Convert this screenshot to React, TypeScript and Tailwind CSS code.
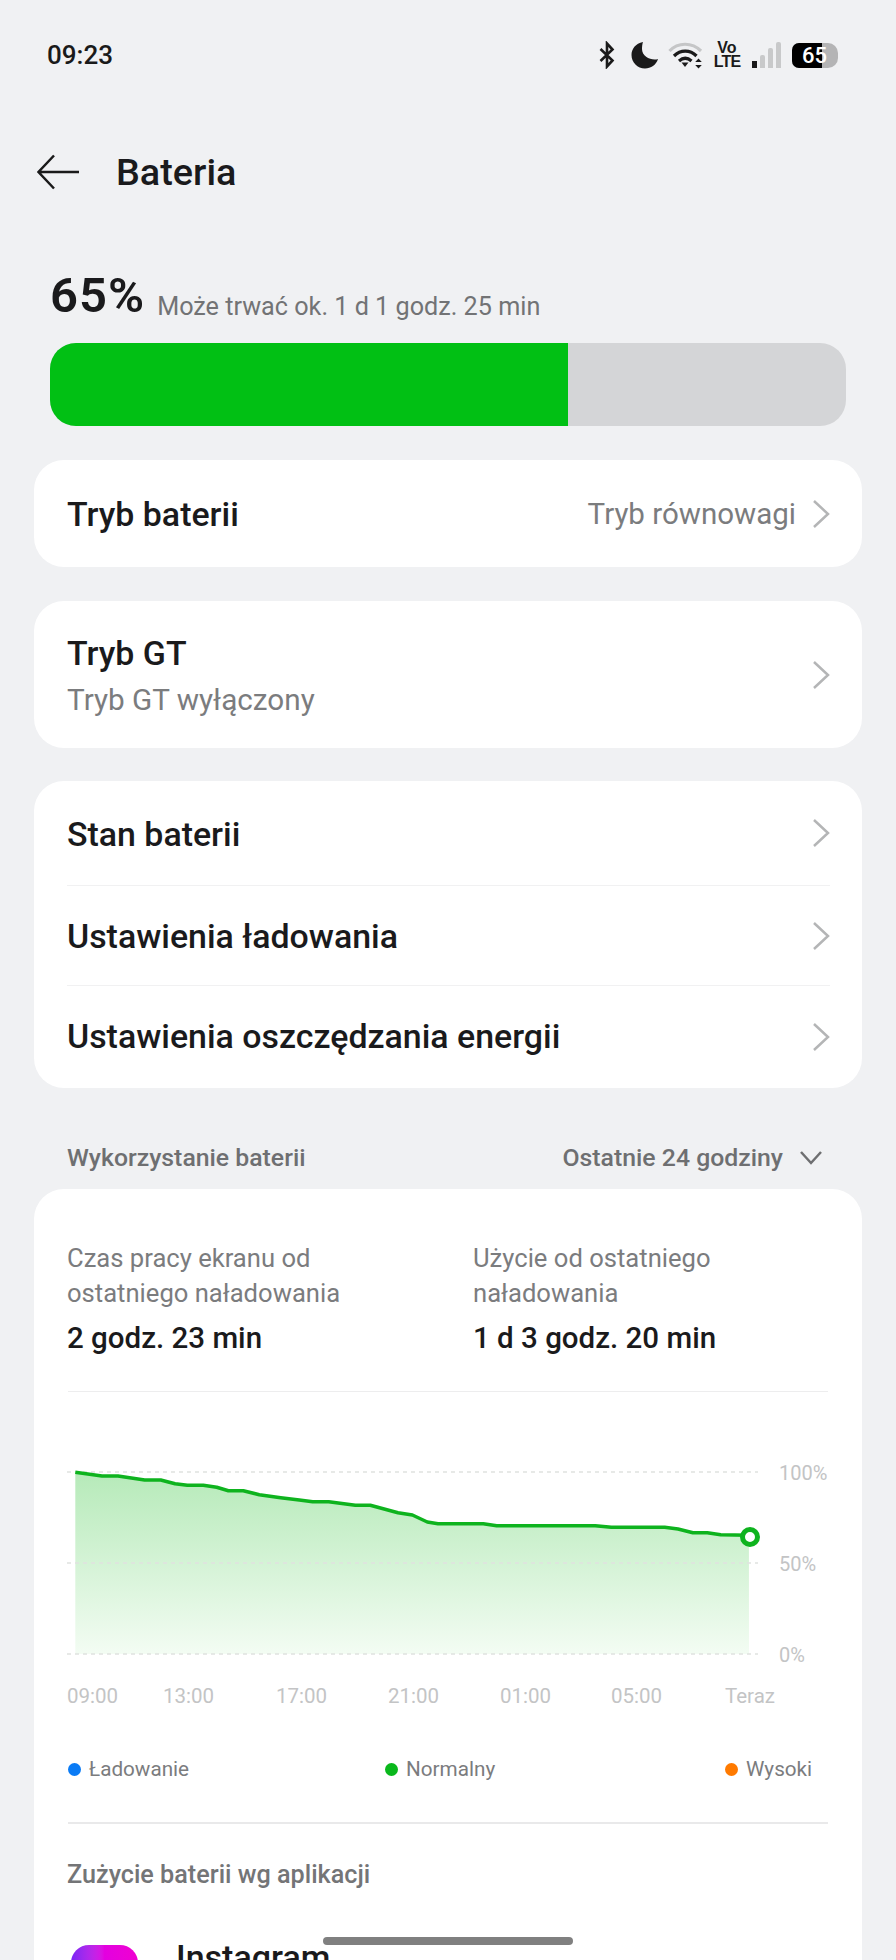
const linePoints = [
  [85, 157], [135, 168], [165, 168], [215, 180], [245, 180], [272, 191], [295, 196], [325, 196],
  [350, 202], [372, 212], [400, 212], [430, 224], [470, 233], [505, 240], [530, 245], [560, 245],
  [610, 256], [638, 256], [690, 278], [717, 285], [745, 306], [765, 311], [850, 311], [875, 317],
  [1060, 317], [1090, 322], [1190, 322], [1215, 327], [1243, 338], [1270, 338], [1295, 344], [1348, 346],
].map(([x, y]) => [+(x / 1.875 - 30).toFixed(1), +(y / 3 - 40).toFixed(1)])

const linePath = linePoints.map((p) => p.join(',')).join(' ')
const areaPath = `${linePath} 689,194 15.300,194`

function Chevron() {
  return (
    <svg width="18" height="30" viewBox="0 0 18 30" fill="none" stroke="#b4b5b6" strokeWidth="2.500" className="shrink-0">
      <path d="M2 2 16 15 2 28" />
    </svg>
  )
}

function StatusIcons() {
  return (
    <div className="flex items-center">
      {/* bluetooth */}
      <svg width="16" height="28" viewBox="0 0 16 28" fill="none" stroke="#1a1a1a" strokeWidth="2.600">
        <path d="M1.500 8 13.500 19.500 8 25.500V2.500L13.500 8.500 1.500 20" />
      </svg>
      {/* moon */}
      <svg width="28" height="28" viewBox="0 0 28 28" className="ml-[16px]">
        <path d="M12 1C4.500 2.500 0.500 8 0.500 14c0 7.500 6 13.500 13.500 13.500 6 0 11-3.500 13-9.500C21 20 11 16 11 8c0-2.500.3-5 1-7Z" fill="#1a1a1a" />
      </svg>
      {/* wifi */}
      <svg width="37" height="28" viewBox="0 0 37 28" className="ml-[9px]" fill="none">
        <path d="M1.500 10C10 1 24 1 33 10" stroke="#c5c6c7" strokeWidth="3.200" />
        <path d="M6 15C12.500 8.500 22 8.500 28.500 15" stroke="#1a1a1a" strokeWidth="3.200" />
        <path d="M11 20C15 16.500 19.500 16.500 23.500 20" stroke="#1a1a1a" strokeWidth="3.200" />
        <path d="M13.500 21.500h7L17 26Z" fill="#1a1a1a" />
        <path d="M30.500 17.500l3.300 3.500h-6.600ZM30.500 27.500l3.300-3.500h-6.600Z" fill="#1a1a1a" />
      </svg>
      {/* volte */}
      <div className="ml-[10px] flex w-[24px] flex-col items-center text-[16px] leading-[14px] font-bold text-[#1a1a1a] [font-family:'Liberation_Sans',sans-serif]">
        <span>Vo</span>
        <span className="tracking-[-0.8px]">LTE</span>
      </div>
      {/* signal */}
      <div className="ml-[13px] flex h-[26px] items-end gap-[3px]">
        <span className="h-[7px] w-[5px] bg-[#1a1a1a]" />
        <span className="h-[13px] w-[5px] rounded-t-[2px] bg-[#c8c9ca]" />
        <span className="h-[20px] w-[5px] rounded-t-[2px] bg-[#c8c9ca]" />
        <span className="h-[26px] w-[5px] rounded-t-[2px] bg-[#c8c9ca]" />
      </div>
      {/* battery */}
      <div className="relative ml-[11px] flex h-[25px] w-[46px] overflow-hidden rounded-l-[7px] rounded-r-[10px] bg-[#b4b4b5]">
        <div className="h-full w-[30px] bg-black" />
        <span className="absolute left-[10px] top-0 text-[22px] leading-[25px] font-medium text-white">65</span>
      </div>
    </div>
  )
}

export default function App() {
  return (
    <div className="relative h-[1960px] overflow-hidden bg-[#f0f1f3] px-[34px] [font-family:Roboto,sans-serif]">
      {/* status bar */}
      <div className="-mx-[34px] flex h-[141px] items-start justify-between pl-[47px] pr-[58px] pt-[41px]">
        <span className="text-[26px] leading-[28px] font-medium text-[#1a1a1a]">09:23</span>
        <StatusIcons />
      </div>

      {/* title */}
      <div className="flex h-[62px] items-center pl-[2px]">
        <svg width="44" height="36" viewBox="0 0 44 36" fill="none" stroke="#1a1a1a" strokeWidth="2.500">
          <path d="M43 18H3M18 1.500 2.500 18 18 34.500" />
        </svg>
        <h1 className="ml-[36px] text-[37.800px] leading-[44px] font-[480] text-[#1a1a1c]">Bateria</h1>
      </div>

      {/* battery level */}
      <div className="mt-[66px] flex h-[70px] items-end pl-[16px] pb-[17px]">
        <span className="text-[49px] leading-[53px] font-semibold tracking-[1px] text-[#1a1a1c]">65%</span>
        <span className="ml-[12px] text-[25.200px] leading-[30px] text-[#727375]">Może trwać ok. 1 d 1 godz. 25 min</span>
      </div>
      <div className="mx-[16px] mt-[4px] flex h-[83px] overflow-hidden rounded-[26px] bg-[#d4d5d7]">
        <div className="h-full w-[518px] bg-[#01c014]" />
      </div>

      {/* tryb baterii */}
      <div className="mt-[34px] flex h-[107px] items-center justify-between rounded-[30px] bg-white pl-[33px] pr-[32px]">
        <span className="pt-[3px] text-[33.900px] font-[480] text-[#1a1a1c]">Tryb baterii</span>
        <div className="flex items-center gap-[16px]">
          <span className="pt-[2px] text-[29.500px] text-[#7b7c7e]">Tryb równowagi</span>
          <Chevron />
        </div>
      </div>

      {/* tryb gt */}
      <div className="mt-[34px] flex h-[147px] items-center justify-between rounded-[30px] bg-white pl-[33px] pr-[32px]">
        <div className="flex flex-col pt-[5px]">
          <span className="text-[33.900px] leading-[46px] font-[480] text-[#1a1a1c]">Tryb GT</span>
          <span className="text-[29.700px] leading-[46px] text-[#7b7c7e]">Tryb GT wyłączony</span>
        </div>
        <Chevron />
      </div>

      {/* settings group */}
      <div className="mt-[33px] flex h-[307px] flex-col rounded-[30px] bg-white pl-[33px] pr-[32px]">
        <div className="flex h-[105px] items-center justify-between border-b border-[#f1f1f2]">
          <span className="pt-[5px] text-[33.900px] font-[480] text-[#1a1a1c]">Stan baterii</span>
          <Chevron />
        </div>
        <div className="flex h-[100px] items-center justify-between border-b border-[#f1f1f2]">
          <span className="pt-[3px] text-[33.900px] font-[480] text-[#1a1a1c]">Ustawienia ładowania</span>
          <Chevron />
        </div>
        <div className="flex h-[102px] items-center justify-between">
          <span className="text-[33.900px] font-[480] text-[#1a1a1c]">Ustawienia oszczędzania energii</span>
          <Chevron />
        </div>
      </div>

      {/* usage header */}
      <div className="flex h-[101px] items-center justify-between pl-[33px] pr-[38px] pt-[38px]">
        <span className="text-[24.800px] font-[480] text-[#6e6f71]">Wykorzystanie baterii</span>
        <div className="flex items-center gap-[15px]">
          <span className="text-[24.800px] font-[480] text-[#6e6f71]">Ostatnie 24 godziny</span>
          <svg width="26" height="16" viewBox="0 0 26 16" fill="none" stroke="#6e6f71" strokeWidth="2.500">
            <path d="M3 2 13 13 23 2" />
          </svg>
        </div>
      </div>

      {/* usage card */}
      <div className="rounded-t-[30px] bg-white px-[34px] pt-[52px] pb-[200px]">
        <div className="flex">
          <div className="w-[405px]">
            <p className="-ml-px text-[25.600px] leading-[35px] text-[#7b7c7e]">
              Czas pracy ekranu od
              <br />
              ostatniego naładowania
            </p>
            <p className="mt-[7px] -ml-px text-[29.500px] leading-[40px] font-[480] text-[#1a1a1c]">2 godz. 23 min</p>
          </div>
          <div>
            <p className="text-[25.600px] leading-[35px] text-[#7b7c7e]">
              Użycie od ostatniego
              <br />
              naładowania
            </p>
            <p className="mt-[7px] text-[29.500px] leading-[40px] font-[480] text-[#1a1a1c]">1 d 3 godz. 20 min</p>
          </div>
        </div>
        <div className="mt-[33px] h-px bg-[#ededee]" />

        {/* chart */}
        <div className="mt-[68px] flex h-[207px]">
          <svg width="711" height="204" viewBox="0 0 711 204" className="-ml-[8px] shrink-0 overflow-visible">
            <defs>
              <linearGradient id="area" x1="0" y1="0" x2="0" y2="1">
                <stop offset="0" stopColor="#b6eab9" />
                <stop offset="1" stopColor="#f3fcf3" />
              </linearGradient>
            </defs>
            <polygon points={areaPath} fill="url(#area)" />
            {[12, 103, 194].map((y) => (
              <line key={y} x1="7" x2="698" y1={y} y2={y} stroke="#dfe2df" strokeWidth="1.500" strokeDasharray="4 4" />
            ))}
            <polyline points={linePath} fill="none" stroke="#0eb31e" strokeWidth="3.500" strokeLinejoin="round" />
            <circle cx="690" cy="77" r="7.500" fill="#fff" stroke="#0eb31e" strokeWidth="5" />
          </svg>
          <div className="ml-[8px] flex h-[207px] flex-col justify-between pt-px text-[20px] leading-[24px] text-[#c3c4c5]">
            <span>100%</span>
            <span>50%</span>
            <span>0%</span>
          </div>
        </div>

        <div className="mt-[16px] grid grid-cols-[96px_113px_112px_112px_111px_114px_auto] -ml-px text-[20.500px] leading-[26px] text-[#c3c4c5]">
          <span>09:00</span>
          <span>13:00</span>
          <span>17:00</span>
          <span>21:00</span>
          <span>01:00</span>
          <span>05:00</span>
          <span>Teraz</span>
        </div>

        {/* legend */}
        <div className="mt-[47px] flex text-[20.700px] leading-[26px] text-[#7b7c7e]">
          <div className="flex w-[317px] items-center gap-[8px]">
            <span className="h-[13px] w-[13px] rounded-full bg-[#0a7bf5]" />
            Ładowanie
          </div>
          <div className="flex w-[340px] items-center gap-[8px]">
            <span className="h-[13px] w-[13px] rounded-full bg-[#0ab81c]" />
            Normalny
          </div>
          <div className="flex items-center gap-[8px]">
            <span className="h-[13px] w-[13px] rounded-full bg-[#ff7a00]" />
            Wysoki
          </div>
        </div>

        <div className="mt-[40px] h-[2px] bg-[#e9e9ea]" />
        <p className="mt-[36px] -ml-px text-[25.200px] leading-[30px] font-[480] text-[#747577]">Zużycie baterii wg aplikacji</p>

        {/* app row */}
        <div className="mt-[55px] flex items-start">
          <div className="ml-[3px] h-[67px] w-[67px] rounded-[18px] bg-gradient-to-r from-[#7a24f5] via-[#e300e0] to-[#f000d0]" />
          <span className="-mt-[8px] ml-[38px] text-[34px] leading-[40px] font-[480] text-[#1a1a1c]">Instagram</span>
        </div>
      </div>

      {/* home indicator */}
      <div className="absolute bottom-[15px] left-[323px] h-[8px] w-[250px] rounded-full bg-[#808080]" />
    </div>
  )
}
